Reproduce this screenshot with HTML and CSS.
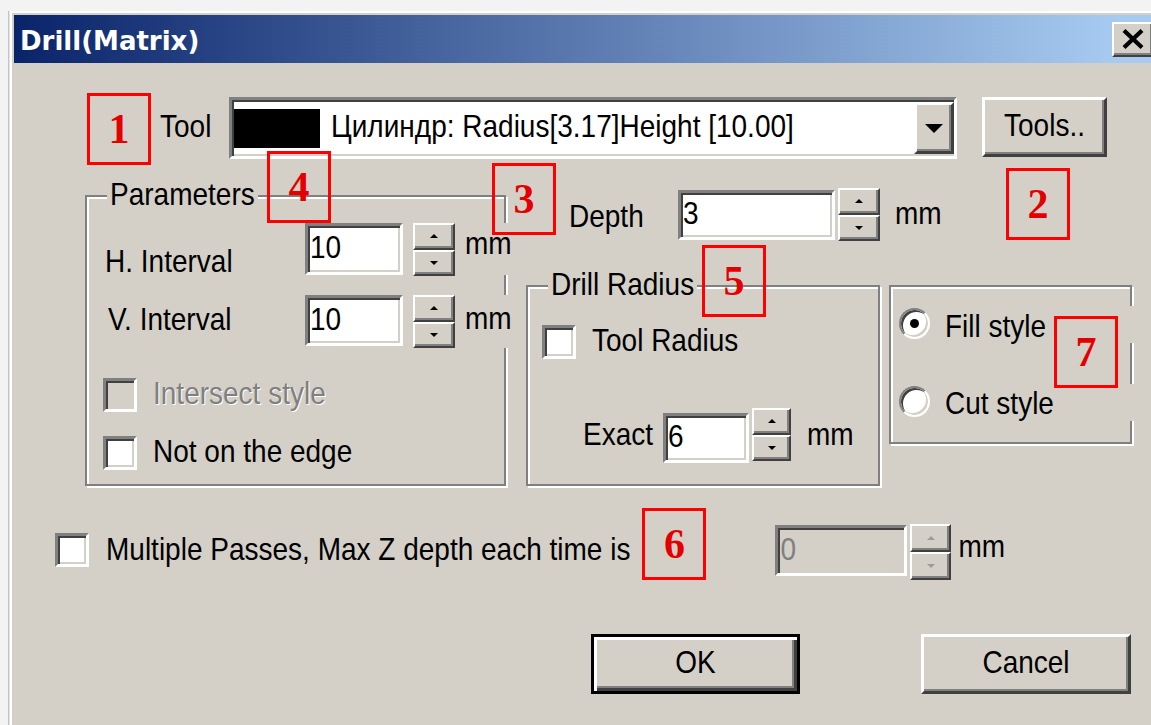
FILE: index.html
```html
<!DOCTYPE html>
<html lang="en">
<head>
<meta charset="utf-8">
<title>Drill(Matrix)</title>
<link rel="stylesheet" href="styles.css">
</head>
<body>
<div class="window">
  <div class="titlebar">
    <span class="title">Drill(Matrix)</span>
    <button class="close-btn" aria-label="Close">
      <svg width="24" height="20" viewBox="0 0 24 20"><path d="M3 1.5 L21 18.5 M21 1.5 L3 18.5" stroke="#000" stroke-width="4.2" fill="none"/></svg>
    </button>
  </div>

  <div class="client">
    <!-- tool selection -->
    <div class="tool-row">
      <div class="marker">1</div>
      <span class="lbl tool-lbl">Tool</span>
      <div class="combo sunken">
        <span class="swatch"></span>
        <span class="combo-text">Цилиндр: Radius[3.17]Height [10.00]</span>
        <span class="drop-btn raised"><i class="tri-down"></i></span>
      </div>
      <div class="btn tools-btn"><span class="tx">Tools..</span>
        <div class="marker m2">2</div>
      </div>
    </div>

    <div class="mid">
      <!-- matrix parameters -->
      <div class="group params">
        <div class="group-title"><span class="tx">Parameters</span></div>
        <div class="marker m4">4</div>
        <div class="field-row h-row">
          <span class="lbl h-lbl">H. Interval</span>
          <div class="edit sunken h-edit"><span class="tx">10</span></div>
          <div class="spin p-spin">
            <span class="spin-btn"><i class="tri-up"></i></span>
            <span class="spin-btn"><i class="tri-dn"></i></span>
          </div>
          <span class="p-unit h-unit"><span class="tx">mm</span></span>
        </div>
        <div class="field-row v-row">
          <span class="lbl v-lbl">V. Interval</span>
          <div class="edit sunken v-edit"><span class="tx">10</span></div>
          <div class="spin p-spin">
            <span class="spin-btn"><i class="tri-up"></i></span>
            <span class="spin-btn"><i class="tri-dn"></i></span>
          </div>
          <span class="p-unit v-unit"><span class="tx">mm</span></span>
        </div>
        <div class="check-row intersect-row">
          <span class="check sunken off"></span>
          <span class="lbl disabled">Intersect style</span>
        </div>
        <div class="check-row edge-row">
          <span class="check sunken"></span>
          <span class="lbl">Not on the edge</span>
        </div>
      </div>

      <div class="right-col">
        <div class="depth-row">
          <div class="marker m3">3</div>
          <span class="lbl depth-lbl">Depth</span>
          <div class="edit sunken depth-edit"><span class="tx">3</span></div>
          <div class="spin depth-spin">
            <span class="spin-btn"><i class="tri-up"></i></span>
            <span class="spin-btn"><i class="tri-dn"></i></span>
          </div>
          <span class="unit depth-unit">mm</span>
        </div>

        <div class="groups-row">
          <div class="group drill">
            <div class="group-title"><span class="tx">Drill Radius</span></div>
            <div class="marker m5">5</div>
            <div class="check-row toolrad-row">
              <span class="check sunken"></span>
              <span class="lbl">Tool Radius</span>
            </div>
            <div class="exact-row">
              <span class="lbl exact-lbl">Exact</span>
              <div class="edit sunken exact-edit"><span class="tx">6</span></div>
              <div class="spin exact-spin">
                <span class="spin-btn"><i class="tri-up"></i></span>
                <span class="spin-btn"><i class="tri-dn"></i></span>
              </div>
              <span class="unit exact-unit">mm</span>
            </div>
          </div>

          <div class="group styles">
            <div class="marker m7">7</div>
            <div class="radio-row fill-row">
              <span class="radio on"></span>
              <span class="radio-lbl"><span class="tx">Fill style</span></span>
            </div>
            <div class="radio-row cut-row">
              <span class="radio"></span>
              <span class="radio-lbl"><span class="tx">Cut style</span></span>
            </div>
          </div>
        </div>
      </div>
    </div>

    <!-- multi-pass option -->
    <div class="passes-row">
      <span class="check sunken passes-check"></span>
      <span class="lbl passes-lbl">Multiple Passes, Max Z depth each time is</span>
      <div class="marker m6">6</div>
      <div class="edit sunken off passes-edit"><span class="tx">0</span></div>
      <div class="spin off passes-spin">
        <span class="spin-btn"><i class="tri-up"></i></span>
        <span class="spin-btn"><i class="tri-dn"></i></span>
      </div>
      <span class="unit passes-unit">mm</span>
    </div>

    <div class="buttons-row">
      <div class="btn default ok-btn"><span class="tx">OK</span></div>
      <div class="btn cancel-btn"><span class="tx">Cancel</span></div>
    </div>
  </div>
</div>
</body>
</html>
```

FILE: styles.css
```css
* { box-sizing: border-box; }

html, body {
  margin: 0;
  height: 100%;
  overflow: hidden;
}

body {
  background: #f3f3f3;
  padding: 11px 0 0 10px;
  font-family: "Liberation Sans", Arial, sans-serif;
  font-size: 28px;
  line-height: 32px;
  color: #000;
}

/* dialog text uses a tall, narrow face: stretch glyphs upward from the baseline */
.lbl,
.unit,
.combo-text,
.tx {
  display: inline-block;
  transform: scaleY(1.15);
  transform-origin: 50% 80%;
}

/* ---------- window frame ---------- */
.window {
  width: 1150px;
  height: 720px;
  background: #d4d0c8;
  border-top: 2px solid #fff;
  border-left: 2px solid #fff;
  padding: 2px 0 0 2px;
  box-shadow: -1px 0 0 #e4e4e4, -2px 0 0 #c4c4c4;
}

.titlebar {
  height: 48px;
  display: flex;
  align-items: center;
  background: linear-gradient(to right, #0a246a, #a6caf0 96%);
}

.title {
  font-family: "DejaVu Sans", sans-serif;
  font-weight: bold;
  font-size: 26px;
  line-height: 30px;
  padding: 4px 0 0 6px;
  color: #fff;
}

.close-btn {
  margin: 0 6px 0 auto;
  width: 42px;
  height: 35px;
  padding: 0;
  display: flex;
  align-items: center;
  justify-content: center;
  background: #d4d0c8;
  border: 2px solid;
  border-color: #fff #404040 #404040 #fff;
  box-shadow: inset -2px -2px 0 #808080;
}

.client {
  display: flex;
  flex-direction: column;
}

/* ---------- 3D bevels ---------- */
.raised {
  background: #d4d0c8;
  border: 3px solid;
  border-color: #fff #404040 #404040 #fff;
  box-shadow: inset -2px -2px 0 #808080;
}

.sunken {
  background: #fff;
  border: 3px solid;
  border-color: #808080 #fff #fff #808080;
  box-shadow: inset 2px 2px 0 #404040, inset -2px -2px 0 #d4d0c8;
}

.btn {
  display: flex;
  align-items: center;
  justify-content: center;
  background: #d4d0c8;
  border: 3px solid;
  border-color: #fff #404040 #404040 #fff;
  box-shadow: inset -2px -2px 0 #808080;
}

.btn.default {
  border-color: #000;
  box-shadow: inset 3px 3px 0 #fff, inset -3px -3px 0 #404040, inset -5px -5px 0 #808080;
}

.lbl { white-space: nowrap; }

.lbl.disabled {
  color: #808080;
  text-shadow: 1px 1px 0 #fff;
}

/* ---------- annotation markers ---------- */
.marker {
  width: 64px;
  height: 72px;
  flex: none;
  border: 3px solid #ff0000;
  display: flex;
  align-items: center;
  justify-content: center;
  font-family: "Liberation Serif", "Times New Roman", serif;
  font-weight: bold;
  font-size: 42px;
  line-height: normal;
  color: #e40000;
}

.m2 { position: absolute; left: 21px; top: 68px; }
.m3 { position: absolute; left: -34px; top: -25px; }
.m4 { position: absolute; left: 180px; top: -46px; }
.m5 { position: absolute; left: 174px; top: -42px; }
.m7 { position: absolute; left: 163px; top: 29px; z-index: 2; }

/* ---------- tool row ---------- */
.tool-row {
  display: flex;
  align-items: flex-start;
  margin-top: 30px;
  padding-left: 73px;
}

.tool-row > * { flex: none; }

.tool-lbl {
  width: 69px;
  margin: 19px 0 0 9px;
}

.combo {
  width: 728px;
  height: 62px;
  margin-top: 4px;
  display: flex;
  align-items: center;
}

.swatch {
  flex: none;
  width: 86px;
  height: 39px;
  margin-left: 2px;
  background: #000;
}

.combo-text {
  margin-left: 11px;
  white-space: nowrap;
}

.drop-btn {
  flex: none;
  margin-left: auto;
  width: 40px;
  height: 52px;
  display: flex;
  align-items: center;
  justify-content: center;
}

.tri-down {
  display: block;
  border-left: 9px solid transparent;
  border-right: 9px solid transparent;
  border-top: 9px solid #000;
}

.tools-btn {
  position: relative;
  width: 125px;
  height: 60px;
  margin: 4px 0 0 25px;
}

/* ---------- group boxes ---------- */
.mid {
  display: flex;
  align-items: flex-start;
  margin-top: 23px;
  padding-left: 71px;
}

.group {
  position: relative;
  flex: none;
  display: flex;
  flex-direction: column;
  border: 2px solid #808080;
  box-shadow: inset 2px 2px 0 #fff, 2px 2px 0 #fff;
}

.group-title {
  align-self: flex-start;
  margin: -17px 0 0 20px;
  padding: 0 3px;
  background: #d4d0c8;
}

.params {
  width: 421px;
  height: 291px;
  margin-top: 7px;
}

.field-row,
.check-row,
.depth-row,
.exact-row,
.passes-row {
  display: flex;
  align-items: flex-start;
}

.field-row > *,
.check-row > *,
.depth-row > *,
.exact-row > *,
.passes-row > * {
  flex: none;
}

.edit {
  display: flex;
  align-items: center;
  padding-left: 2px;
}

.edit.off {
  background: #d4d0c8;
  color: #808080;
}

/* spin buttons */
.spin {
  display: flex;
  flex-direction: column;
}

.spin-btn {
  flex: 1;
  display: flex;
  align-items: center;
  justify-content: center;
  background: #d4d0c8;
  border: 2px solid;
  border-color: #fff #404040 #404040 #fff;
  box-shadow: inset -2px -2px 0 #808080;
}

.tri-up,
.tri-dn {
  display: block;
  border-left: 4px solid transparent;
  border-right: 4px solid transparent;
}

.tri-up { border-bottom: 4px solid #000; }
.tri-dn { border-top: 4px solid #000; }

.spin.off .tri-up { border-bottom-color: #9a9a9a; }
.spin.off .tri-dn { border-top-color: #9a9a9a; }

.p-unit {
  position: relative;
  background: #d4d0c8;
  margin-left: 10px;
}

/* H / V interval rows */
.h-row { margin-top: 11px; padding-left: 18px; }
.h-lbl { width: 200px; margin-top: 24px; }
.h-edit { width: 98px; height: 52px; }
.p-spin { width: 42px; height: 53px; margin-left: 10px; }
.h-unit { height: 52px; padding-top: 6px; }

.v-row { margin-top: 16px; padding-left: 21px; }
.v-lbl { width: 197px; margin-top: 10px; }
.v-edit { width: 98px; height: 51px; }
.v-unit { height: 53px; padding-top: 9px; }

/* checkboxes */
.check {
  flex: none;
  width: 34px;
  height: 34px;
}

.check.off { background: #d4d0c8; }

.check-row .lbl {
  margin: 1px 0 0 16px;
}

.intersect-row { margin-top: 30px; padding-left: 16px; }
.edge-row { margin-top: 24px; padding-left: 16px; }

/* ---------- right column ---------- */
.right-col {
  display: flex;
  flex-direction: column;
  margin-left: 20px;
}

.depth-row {
  position: relative;
  padding-left: 43px;
}

.depth-lbl { width: 109px; margin-top: 14px; }
.depth-edit { width: 157px; height: 50px; margin-top: 2px; }
.depth-spin { width: 42px; height: 53px; margin-left: 3px; }
.depth-unit { margin: 11px 0 0 15px; }

.groups-row {
  display: flex;
  align-items: flex-start;
  margin-top: 44px;
}

.drill {
  width: 354px;
  height: 201px;
}

.toolrad-row { margin-top: 23px; padding-left: 14px; }
.toolrad-row .lbl { margin-left: 16px; }

.exact-row { margin-top: 49px; padding-left: 55px; }
.exact-lbl { width: 80px; margin-top: 12px; }
.exact-edit { width: 86px; height: 50px; margin-top: 5px; }
.exact-spin { width: 39px; height: 53px; margin-left: 3px; }
.exact-unit { margin: 12px 0 0 16px; }

/* fill / cut radio group */
.styles {
  width: 243px;
  height: 159px;
  margin-left: 9px;
}

.radio-row {
  display: flex;
  align-items: flex-start;
  height: 37px;
  padding-left: 8px;
}

.fill-row { margin-top: 19px; }
.cut-row { margin-top: 41px; }

.radio {
  flex: none;
  width: 31px;
  height: 31px;
  margin-top: 2px;
  border-radius: 50%;
  background: #fff;
  border: 2px solid;
  border-color: #808080 #fff #fff #808080;
  box-shadow: inset 2px 2px 0 #404040, inset -2px -2px 0 #d4d0c8;
  display: flex;
  align-items: center;
  justify-content: center;
}

.radio.on::after {
  content: "";
  width: 9px;
  height: 9px;
  border-radius: 50%;
  background: #000;
}

.radio-lbl {
  flex: 1;
  height: 37px;
  margin: 0 -5px 0 15px;
  padding-top: 6px;
  background: #d4d0c8;
  white-space: nowrap;
  position: relative;
}

.cut-row .radio-lbl { padding-top: 5px; }

/* ---------- multiple passes ---------- */
.passes-row {
  margin-top: 22px;
  padding-left: 41px;
}

.passes-check { margin-top: 25px; }
.passes-lbl { margin: 27px 0 0 17px; }
.m6 { margin-left: 12px; }
.passes-edit { width: 132px; height: 51px; margin: 17px 0 0 69px; }
.passes-spin { width: 41px; height: 56px; margin: 16px 0 0 3px; }
.passes-unit { margin: 24px 0 0 7px; }

/* ---------- dialog buttons ---------- */
.buttons-row {
  display: flex;
  margin-top: 54px;
  padding-left: 577px;
}

.ok-btn { width: 209px; height: 60px; }
.cancel-btn { width: 210px; height: 60px; margin-left: 121px; }
```
